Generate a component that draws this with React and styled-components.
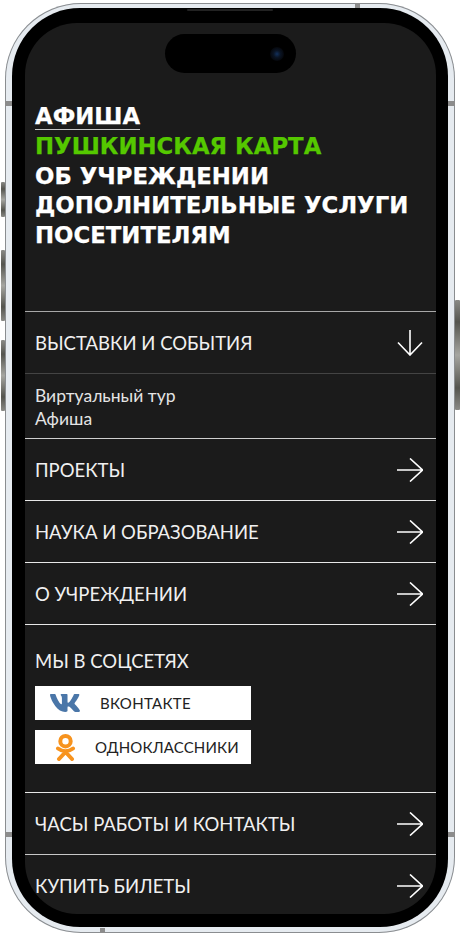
import styled, { createGlobalStyle } from 'styled-components'
import { FaVk } from 'react-icons/fa'

const GlobalStyle = createGlobalStyle`
	html, body {
		margin: 0;
		padding: 0;
		background: #fff;
	}
	body {
		font-family: 'Lato', 'Open Sans', sans-serif;
	}
`

const topLinks = [
	{ label: 'Афиша', underlined: true },
	{ label: 'Пушкинская карта', green: true },
	{ label: 'Об учреждении' },
	{ label: 'Дополнительные услуги' },
	{ label: 'Посетителям' },
]

const ArrowRight = () => (
	<Arrow width='26' height='24' viewBox='0 0 26 24'>
		<path d='M0 12H25.5M13 0.5L25.5 12L13 23.5' />
	</Arrow>
)

const ArrowDown = () => (
	<Arrow width='26' height='26' viewBox='0 0 26 26'>
		<path d='M13 0V25M1 12.5L13 25L25 12.5' />
	</Arrow>
)

const OkLogo = () => (
	<OkIcon width='21' height='27' viewBox='0 0 21 27'>
		<circle cx='10.5' cy='7.2' r='5.2' />
		<path d='M3 14.5Q10.5 20 18 14.5M10.5 18L4 25M10.5 18L17 25' />
	</OkIcon>
)

export default function App() {
	return (
		<Page>
			<GlobalStyle />
			<Shell>
				{/* Phone hardware */}
				<SideButton $left $top={179} $height={35} />
				<SideButton $left $top={247} $height={71} />
				<SideButton $left $top={337} $height={71} />
				<SideButton $top={297} $height={110} />
				<Band $side='left' $top={98} />
				<Band $side='right' $top={98} />
				<Band $side='left' $top={829} />
				<Band $side='right' $top={829} />
				<TopBand $side='top' $left={350} />
				<TopBand $side='bottom' $left={95} />

				<Bezel>
					<Speaker />
					<Notch>
						<Camera />
					</Notch>

					<Screen>
						<TopMenu>
							{topLinks.map(({ label, underlined, green }) => (
								<TopLink key={label} $green={green}>
									{underlined ? <Underlined>{label}</Underlined> : label}
								</TopLink>
							))}
						</TopMenu>

						<Row $line='#a8a8a8'>
							<RowLabel>Выставки и события</RowLabel>
							<ArrowDown />
						</Row>

						<SubMenu>
							<SubLink>Виртуальный тур</SubLink>
							<SubLink>Афиша</SubLink>
						</SubMenu>

						<Row $line='#cfcfcf'>
							<RowLabel>Проекты</RowLabel>
							<ArrowRight />
						</Row>
						<Row $line='#e8e8e8'>
							<RowLabel>Наука и образование</RowLabel>
							<ArrowRight />
						</Row>
						<Row $line='#e8e8e8'>
							<RowLabel>О учреждении</RowLabel>
							<ArrowRight />
						</Row>

						<Social>
							<SocialTitle>Мы в соцсетях</SocialTitle>
							<SocialButton $gap={19} $pad={14}>
								<FaVk size={32} color='#4a76a8' />
								<SocialName $tracking={0.3}>Вконтакте</SocialName>
							</SocialButton>
							<SocialButton $gap={19} $pad={20}>
								<OkLogo />
								<SocialName $tracking={0.15}>Одноклассники</SocialName>
							</SocialButton>
						</Social>

						<Row $line='#e8e8e8'>
							<RowLabel>Часы работы и контакты</RowLabel>
							<ArrowRight />
						</Row>
						<Row $line='#c8c8c8'>
							<RowLabel>Купить билеты</RowLabel>
							<ArrowRight />
						</Row>
					</Screen>
				</Bezel>
			</Shell>
		</Page>
	)
}

// Phone frame
const Page = styled.div`
	width: 460px;
	height: 935px;
	padding: 3px 0 0 5px;
	box-sizing: border-box;
	overflow: hidden;
`

const Shell = styled.div`
	position: relative;
	width: 450px;
	height: 930px;
	box-sizing: border-box;
	padding: 5px 7px 6px 7px;
	border-radius: 76px;
	background: #e6ebf0;
	box-shadow: inset 0 0 0 1px #8a8d90;
`

const SideButton = styled.div`
	position: absolute;
	top: ${(p) => p.$top}px;
	${(p) => (p.$left ? 'left: -4px;' : 'right: -5px;')}
	width: ${(p) => (p.$left ? 4 : 5)}px;
	height: ${(p) => p.$height}px;
	background: linear-gradient(
		to bottom,
		#8a8a86,
		#55554f 20%,
		#a5a5a0 50%,
		#55554f 80%,
		#8a8a86
	);
	border-radius: 1px;
`

const Band = styled.div`
	position: absolute;
	top: ${(p) => p.$top}px;
	${(p) => p.$side}: 0;
	width: 7px;
	height: 5px;
	background: #8c8c8c;
`

const TopBand = styled.div`
	position: absolute;
	${(p) => p.$side}: 0;
	left: ${(p) => p.$left}px;
	width: 5px;
	height: 5px;
	background: #8c8c8c;
`

const Bezel = styled.div`
	position: relative;
	height: 100%;
	box-sizing: border-box;
	padding: 15px 12px 13px 13px;
	border-radius: 68px;
	background: #000;
`

const Speaker = styled.div`
	position: absolute;
	top: 1px;
	left: 175px;
	width: 86px;
	height: 2px;
	border-radius: 1px;
	background: #222;
`

const Notch = styled.div`
	position: absolute;
	top: 26px;
	left: 153px;
	width: 131px;
	height: 39px;
	border-radius: 20px;
	background: #000;
`

const Camera = styled.span`
	position: absolute;
	top: 13px;
	left: 105px;
	width: 14px;
	height: 14px;
	border-radius: 50%;
	background: radial-gradient(circle, #12305c 0, #0a1424 35%, #05070c 70%);
`

const Screen = styled.div`
	height: 100%;
	border-radius: 52px;
	background: #1b1b1b;
	overflow: hidden;
	padding-top: 79px;
	box-sizing: border-box;
`

// Top menu
const TopMenu = styled.nav`
	display: flex;
	flex-direction: column;
	padding: 0 10px;
	height: 209px;
	box-sizing: border-box;
`

const TopLink = styled.a`
	display: block;
	height: 29.8px;
	line-height: 29.8px;
	font-family: 'DejaVu Sans', 'Lato', sans-serif;
	font-size: 22.8px;
	font-weight: 700;
	-webkit-text-stroke: 0.25px currentColor;
	text-transform: uppercase;
	white-space: nowrap;
	color: ${(p) => (p.$green ? '#55c800' : '#fff')};
`

const Underlined = styled.span`
	display: inline-block;
	line-height: 26px;
	border-bottom: 1px solid #c8c8c8;
`

// Rows
const Row = styled.div`
	display: flex;
	align-items: center;
	justify-content: space-between;
	height: 62px;
	box-sizing: border-box;
	padding: 0 13px 0 10px;
	border-top: 1px solid ${(p) => p.$line};
`

const RowLabel = styled.span`
	font-size: 18.5px;
	color: #f0f0f0;
	text-transform: uppercase;
	white-space: nowrap;
`

const Arrow = styled.svg`
	flex: none;

	path {
		fill: none;
		stroke: #fff;
		stroke-width: 1.6;
	}
`

const OkIcon = styled.svg`
	flex: none;

	circle,
	path {
		fill: none;
		stroke: #f7931e;
		stroke-width: 4;
		stroke-linecap: round;
	}
`

const SubMenu = styled.div`
	display: flex;
	flex-direction: column;
	height: 65px;
	box-sizing: border-box;
	padding: 10px 10px 0;
	border-top: 1px solid #444;
`

const SubLink = styled.a`
	font-size: 17.5px;
	line-height: 23px;
	color: #e4e4e4;
`

// Social block
const Social = styled.section`
	display: flex;
	flex-direction: column;
	gap: 10px;
	height: 168px;
	box-sizing: border-box;
	padding: 25px 10px 0;
	border-top: 1px solid #e8e8e8;
`

const SocialTitle = styled.h3`
	margin: 0 0 3px;
	font-size: 18.5px;
	line-height: 23px;
	font-weight: 400;
	color: #f0f0f0;
	text-transform: uppercase;
`

const SocialButton = styled.a`
	display: flex;
	align-items: center;
	gap: ${(p) => p.$gap}px;
	width: 216px;
	height: 34px;
	box-sizing: border-box;
	padding-left: ${(p) => p.$pad}px;
	background: #fff;
`

const SocialName = styled.span`
	font-size: 15px;
	letter-spacing: ${(p) => p.$tracking}px;
	color: #222;
	text-transform: uppercase;
	white-space: nowrap;
`
